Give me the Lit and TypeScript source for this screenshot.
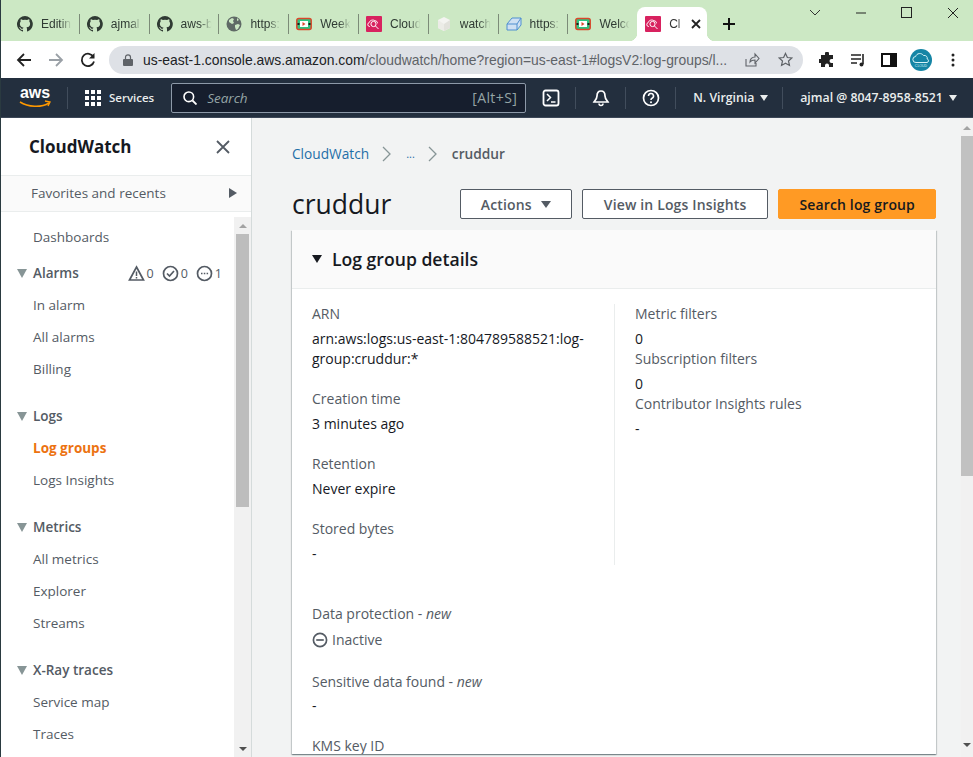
import { LitElement, html, css, svg } from "lit";
import { customElement } from "lit/decorators.js";

const GH = svg`<path fill="#2f3a33" d="M8 0a8 8 0 0 0-2.5 15.6c.4.1.5-.2.5-.4v-1.4c-2.2.5-2.7-1-2.7-1-.4-.9-.9-1.2-.9-1.2-.7-.5.1-.5.1-.5.8.1 1.2.8 1.2.8.7 1.2 1.9.9 2.3.7.1-.5.3-.9.5-1.1-1.8-.2-3.6-.9-3.6-4 0-.9.3-1.6.8-2.1-.1-.2-.4-1 .1-2.1 0 0 .7-.2 2.2.8a7.7 7.7 0 0 1 4 0c1.5-1 2.2-.8 2.2-.8.4 1.1.2 1.9.1 2.1.5.6.8 1.3.8 2.1 0 3.1-1.9 3.7-3.7 3.9.3.3.6.8.6 1.5v2.2c0 .2.1.5.6.4A8 8 0 0 0 8 0z"/>`;
const GLOBE = svg`<circle cx="8" cy="8" r="7.5" fill="#5f6a66"/><path fill="#cce8c4" d="M3 4l3-2 2 1-1 2 1 2-2 1-3-2zM9 9l3-1 2 1-2 4-2 1-1-3zM11 2l2 2-2 1z"/>`;
const VIDEO = svg`<rect x=".8" y="2.5" width="14.4" height="11" rx="2" fill="#2ec27e" stroke="#d9472b" stroke-width="1.5"/><rect x="4" y="5" width="8" height="6" fill="#fff"/><path d="M6.5 6l3 2-3 2z" fill="#d9472b"/><rect x="1.5" y="7" width="2" height="2" fill="#1b1b1b"/><rect x="12.5" y="7" width="2" height="2" fill="#1b1b1b"/>`;
const WATCH = svg`<rect width="16" height="16" rx="1" fill="#d8225f"/><circle cx="7.5" cy="8" r="2.6" fill="none" stroke="#fff" stroke-width="1"/><path d="M4 10.5H3.5a2 2 0 0 1-.3-3.9c.5-2.4 4-3.4 5.8-1.8 1.5 0 2.5 1 2.5 2.5M9.5 10l3 3" fill="none" stroke="#fff" stroke-width="1"/>`;
const BOX = svg`<path d="M8 1l6 3v8l-6 3-6-3V4z" fill="#f4f4f1"/><path d="M8 8l6-4v8l-6 3z" fill="#e2e2dc"/><path d="M8 8L2 4v8l6 3z" fill="#ecece7"/>`;
const SHAPE = svg`<path d="M1 14V8l5-6h9v7l-4 5zM1 8h10v6M11 8l4-6" fill="#cfe0f3" stroke="#4f8fd0" stroke-width="1"/>`;

const TABS = [
  { icon: GH, title: "Editin" },
  { icon: GH, title: "ajmal" },
  { icon: GH, title: "aws-b" },
  { icon: GLOBE, title: "https:" },
  { icon: VIDEO, title: "Week" },
  { icon: WATCH, title: "Cloud" },
  { icon: BOX, title: "watch" },
  { icon: SHAPE, title: "https:" },
  { icon: VIDEO, title: "Welco" },
];

const NAV_ITEMS = [
  { kind: "link", label: "Dashboards" },
  { kind: "head", label: "Alarms", alarms: true },
  { kind: "link", label: "In alarm" },
  { kind: "link", label: "All alarms" },
  { kind: "link", label: "Billing" },
  { kind: "head", label: "Logs", spaced: true },
  { kind: "link", label: "Log groups", active: true },
  { kind: "link", label: "Logs Insights" },
  { kind: "head", label: "Metrics", spaced: true },
  { kind: "link", label: "All metrics" },
  { kind: "link", label: "Explorer" },
  { kind: "link", label: "Streams" },
  { kind: "head", label: "X-Ray traces", spaced: true },
  { kind: "link", label: "Service map" },
  { kind: "link", label: "Traces" },
];

@customElement("app-root")
export class AppRoot extends LitElement {
  static styles = css`
    :host {
      display: block;
      width: 973px;
      height: 757px;
      overflow: hidden;
      font-family: "Open Sans", "Noto Sans", sans-serif;
      color: #16191f;
      background: #f2f3f3;
    }
    .shell {
      height: 757px;
      display: flex;
      flex-direction: column;
      border-left: 1px solid #2a3a40;
      box-sizing: border-box;
    }

    /* Browser tab strip */
    .tabstrip {
      height: 41px;
      flex: none;
      background: #cce8c4;
      display: flex;
      align-items: flex-end;
      padding-left: 8px;
      position: relative;
    }
    .tab {
      width: 69.8px;
      height: 34px;
      box-sizing: border-box;
      padding: 0 3px 0 8px;
      display: flex;
      align-items: center;
      gap: 8px;
      position: relative;
      font: 12px "Liberation Sans", Arial, sans-serif;
      color: #2f3a33;
      white-space: nowrap;
    }
    .tab + .tab::before {
      content: "";
      position: absolute;
      left: 0;
      top: 7px;
      height: 20px;
      width: 1px;
      background: #7c8b78;
    }
    .tab svg { width: 16px; height: 16px; flex: none; }
    .tab .name {
      width: 34px;
      overflow: hidden;
      -webkit-mask-image: linear-gradient(to right, #000 55%, transparent 90%);
      mask-image: linear-gradient(to right, #000 55%, transparent 90%);
    }
    .tab.active {
      background: #fff;
      border-radius: 8px 8px 0 0;
      color: #333;
      gap: 8px;
    }
    .tab.active .name {
      width: 14px;
      -webkit-mask-image: linear-gradient(to right, #000 65%, transparent 100%);
      mask-image: linear-gradient(to right, #000 65%, transparent 100%);
    }
    .tab.active .x { width: 10px; height: 10px; margin-left: 0; }
    .tab.active::before,
    .tab.active::after {
      content: "";
      position: absolute;
      bottom: 0;
      top: auto;
      width: 8px;
      height: 8px;
    }
    .tab.active::before {
      left: -8px;
      background: radial-gradient(circle at 0 0, transparent 8px, #fff 8.5px);
    }
    .tab.active::after {
      right: -8px;
      background: radial-gradient(circle at 100% 0, transparent 8px, #fff 8.5px);
    }
    .newtab { width: 14px; height: 14px; margin: 0 0 10px 15px; }
    .winctl {
      position: absolute;
      right: -3px;
      top: 0;
      display: flex;
    }
    .winctl span {
      width: 46px;
      height: 26px;
      display: flex;
      align-items: center;
      justify-content: center;
    }

    /* Address bar */
    .toolbar {
      height: 37px;
      flex: none;
      background: #fff;
      display: flex;
      align-items: center;
      padding-left: 15px;
      box-sizing: border-box;
    }
    .toolbar .navbtn { width: 16px; height: 16px; margin-right: 16px; flex: none; }
    .omnibox {
      width: 694px;
      margin-left: -3px;
      height: 28px;
      border-radius: 14px;
      background: #dee1e6;
      display: flex;
      align-items: center;
      padding: 0 10px 0 14px;
      box-sizing: border-box;
      font: 13.9px "Liberation Sans", Arial, sans-serif;
      color: #202124;
      white-space: nowrap;
      flex: none;
    }
    .omnibox .lock { width: 10px; height: 12px; margin-right: 10px; flex: none; }
    .omnibox .rest { color: #5f6368; }
    .omnibox .url { flex: 1; }
    .omnibox .share { width: 16px; height: 16px; margin-right: 18px; }
    .omnibox .star { width: 15px; height: 15px; }
    .tools {
      display: flex;
      align-items: center;
      margin-left: 16px;
      gap: 15px;
    }
    .tools svg { width: 16px; height: 16px; display: block; }
    .avatar {
      width: 22px;
      height: 22px;
      margin: 0 -2px;
      border-radius: 50%;
      background: #1585a5;
      display: flex;
      align-items: center;
      justify-content: center;
    }
    .tools .avatar svg { width: 22px; height: 22px; }

    /* AWS console nav */
    .awsnav {
      height: 40px;
      flex: none;
      background: #232f3e;
      color: #eaeded;
      display: flex;
      align-items: center;
      font-size: 12.3px;
      font-weight: 600;
      box-sizing: border-box;
      border-bottom: 1px solid #3c4757;
    }
    .logo { width: 32px; height: 30px; margin-left: 18px; flex: none; }
    .navsep { width: 1px; height: 22px; background: #414d5c; flex: none; }
    .awsnav .s1 { margin: 0 17px 0 16px; }
    .grid {
      width: 16px;
      height: 16px;
      display: grid;
      grid-template-columns: repeat(3, 4px);
      grid-template-rows: repeat(3, 4px);
      gap: 2px;
      margin-right: 8px;
      flex: none;
    }
    .grid i { background: #fff; display: block; }
    .services { font-size: 11.5px; }
    .search {
      width: 355px;
      height: 30px;
      margin-left: 17px;
      background: #161e2d;
      border: 1px solid #8d99a8;
      border-radius: 2px;
      box-sizing: border-box;
      display: flex;
      align-items: center;
      padding: 0 8px 0 11px;
      font-weight: 400;
      font-size: 13.5px;
      color: #95a5a6;
      flex: none;
    }
    .search svg { width: 14px; height: 14px; margin-right: 10px; }
    .search em { flex: 1; }
    .search .keys { font-size: 14px; letter-spacing: .4px; }
    .navicon { width: 49px; display: flex; justify-content: center; flex: none; }
    .navicon svg { width: 18px; height: 18px; display: block; }
    .caret {
      display: inline-block;
      width: 0;
      height: 0;
      border-top: 6px solid #eaeded;
      border-left: 4px solid transparent;
      border-right: 4px solid transparent;
      margin-left: 6px;
      vertical-align: 1px;
    }
    .region { width: 106px; padding-left: 17px; box-sizing: border-box; flex: none; white-space: nowrap; }
    .account { margin-left: 17px; white-space: nowrap; }

    /* Page below the nav */
    .body {
      flex: 1;
      min-height: 0;
      display: flex;
    }
    .side {
      width: 250px;
      flex: none;
      background: #fff;
      border-right: 1px solid #d5dbdb;
      box-sizing: content-box;
      display: flex;
      flex-direction: column;
    }
    .sidehead {
      height: 57px;
      flex: none;
      display: flex;
      align-items: center;
      justify-content: space-between;
      padding: 0 21px 0 28px;
      font-size: 17px;
      font-weight: 700;
      box-sizing: border-box;
    }
    .sidehead svg { width: 14px; height: 14px; }
    .favs {
      height: 37px;
      flex: none;
      background: #fafafa;
      border-top: 1px solid #eaeded;
      border-bottom: 1px solid #eaeded;
      box-sizing: border-box;
      display: flex;
      align-items: center;
      justify-content: space-between;
      padding: 0 14px 1px 30px;
      font-size: 13.5px;
      color: #545b64;
    }
    .favs .tri {
      width: 0;
      height: 0;
      border-left: 8px solid #545b64;
      border-top: 5px solid transparent;
      border-bottom: 5px solid transparent;
    }
    .sidescroll {
      flex: 1;
      min-height: 0;
      display: flex;
      overflow: hidden;
      padding-top: 5px;
    }
    .navlist {
      flex: 1;
      padding: 4px 0 0 0;
      font-size: 13.5px;
      color: #545b64;
      overflow: hidden;
    }
    .item {
      height: 32px;
      display: flex;
      align-items: center;
      padding-left: 32px;
      white-space: nowrap;
    }
    .item.head {
      font-weight: 600;
      padding-left: 16px;
      margin-top: 4px;
    }
    .item.head.spaced { margin-top: 15px; }
    .item.active { color: #ec7211; font-weight: 700; }
    .item .down {
      width: 0;
      height: 0;
      border-top: 9px solid #879596;
      border-left: 5.5px solid transparent;
      border-right: 5.5px solid transparent;
      margin-right: 6px;
    }
    .alarms {
      margin-left: auto;
      margin-right: 12px;
      display: flex;
      align-items: center;
      font-weight: 400;
      font-size: 12.5px;
      gap: 2px;
    }
    .alarms svg { width: 17px; height: 17px; margin-left: 6px; }
    .bar {
      width: 17px;
      flex: none;
      background: #f1f1f1;
      display: flex;
      flex-direction: column;
      align-items: center;
    }
    .bar .up, .bar .dn {
      width: 0;
      height: 0;
      border-left: 4px solid transparent;
      border-right: 4px solid transparent;
      flex: none;
    }
    .bar .up { border-bottom: 4px solid #a3a3a3; margin: 7px 0 6px; }
    .bar .dn { border-top: 4px solid #505050; margin: auto 0 6px; }
    .bar .thumb { width: 13px; height: 273px; background: #bdbdbd; flex: none; }

    .main {
      flex: 1;
      min-width: 0;
      display: flex;
    }
    .content {
      flex: 1;
      min-width: 0;
      padding: 0 25px 3px 40px;
      display: flex;
      flex-direction: column;
      overflow: hidden;
    }
    .crumbs {
      height: 71px;
      flex: none;
      display: flex;
      align-items: center;
      box-sizing: border-box;
      font-size: 13.7px;
      color: #545b64;
      font-weight: 600;
    }
    .crumbs a { color: #1f6fa8; font-weight: 400; }
    .crumbs .dots { font-size: 11px; }
    .crumbs svg { width: 10px; height: 16px; margin: 0 14px 0 13px; }
    .titlerow {
      height: 30px;
      flex: none;
      display: flex;
      align-items: center;
      margin-bottom: 11px;
    }
    h1 {
      margin: 0;
      font-size: 26.5px;
      font-weight: 400;
      flex: 1;
      line-height: 30px;
    }
    .btn {
      height: 30px;
      box-sizing: border-box;
      border: 1px solid #545b64;
      border-radius: 2px;
      background: #fff;
      color: #545b64;
      font: 600 14px "Open Sans", "Noto Sans", sans-serif;
      letter-spacing: .15px;
      padding: 0 20px;
      margin-left: 10px;
      display: flex;
      align-items: center;
      white-space: nowrap;
    }
    .btn.wide { padding: 0 21px; }
    .btn.primary {
      background: #ff9a24;
      border-color: #ff9a24;
      color: #16191f;
    }
    .btn .dn {
      width: 0;
      height: 0;
      border-top: 7px solid #545b64;
      border-left: 5px solid transparent;
      border-right: 5px solid transparent;
      margin-left: 9px;
    }
    .card {
      flex: 1;
      min-height: 0;
      background: #fff;
      box-shadow: 0 1px 1px 0 rgba(0, 28, 36, 0.3), 1px 1px 1px 0 rgba(0, 28, 36, 0.15), -1px 1px 1px 0 rgba(0, 28, 36, 0.15);
      overflow: hidden;
    }
    .cardhead {
      height: 59px;
      background: #fafafa;
      border-bottom: 1px solid #eaeded;
      box-sizing: border-box;
      display: flex;
      align-items: center;
      padding: 0 0 1px 20px;
      font-size: 17.6px;
      font-weight: 600;
    }
    .cardhead i {
      width: 0;
      height: 0;
      border-top: 8px solid #16191f;
      border-left: 5.5px solid transparent;
      border-right: 5.5px solid transparent;
      margin-right: 10px;
    }
    .columns {
      display: grid;
      grid-template-columns: 303px 1fr;
      padding: 15px 20px 0;
    }
    .col1 {
      height: 261px;
      border-right: 1px solid #eaeded;
      padding-right: 20px;
    }
    .col2 { padding-left: 20px; }
    .field { margin-bottom: 20px; font-size: 14px; }
    .label { color: #545b64; line-height: 20px; margin-bottom: 5px; }
    .value { line-height: 20px; color: #16191f; }
    .tight { margin: 0; }
    .below { padding: 39px 20px 0; }
    .status {
      display: flex;
      align-items: center;
      gap: 4px;
      color: #545b64;
      margin-top: 6px;
      padding-bottom: 2px;
    }
    .status svg { width: 16px; height: 16px; }
    .sens .label { margin-bottom: 4px; }

    .mainbar { width: 12px; background: #f1f1f1; }
    .mainbar .up { margin: 8px 0 6px; }
    .mainbar .dn { margin-bottom: 10px; }
    .mainbar .thumb { width: 12px; height: 340px; background: #c1c1c1; }
  `;

  render() {
    return html`
      <div class="shell">
        <div class="tabstrip">
          ${TABS.map(
            (t) => html`<div class="tab">
              <svg viewBox="0 0 16 16">${t.icon}</svg>
              <span class="name">${t.title}</span>
            </div>`
          )}
          <div class="tab active">
            <svg viewBox="0 0 16 16">${WATCH}</svg>
            <span class="name">Cl</span>
            <svg class="x" viewBox="0 0 10 10"><path d="M1 1l8 8M9 1l-8 8" stroke="#222" stroke-width="1.8" /></svg>
          </div>
          <svg class="newtab" viewBox="0 0 14 14"><path d="M7 1v12M1 7h12" stroke="#111" stroke-width="2" /></svg>
          <div class="winctl">
            <span><svg width="12" height="8" viewBox="0 0 12 8"><path d="M1 1l5 5 5-5" fill="none" stroke="#333" /></svg></span>
            <span><svg width="12" height="2" viewBox="0 0 12 2"><path d="M1 1h10" stroke="#222" /></svg></span>
            <span><svg width="12" height="12" viewBox="0 0 12 12"><rect x=".5" y=".5" width="10" height="10" fill="none" stroke="#222" /></svg></span>
            <span><svg width="12" height="12" viewBox="0 0 12 12"><path d="M1 1l10 10M11 1L1 11" stroke="#222" /></svg></span>
          </div>
        </div>

        <div class="toolbar">
          <svg class="navbtn" viewBox="0 0 16 16"><path d="M15 8H2M8 2L2 8l6 6" fill="none" stroke="#222" stroke-width="1.8" /></svg>
          <svg class="navbtn" viewBox="0 0 16 16"><path d="M1 8h13M8 2l6 6-6 6" fill="none" stroke="#9aa0a6" stroke-width="1.8" /></svg>
          <svg class="navbtn" viewBox="0 0 16 16"><path d="M13.5 5A6.2 6.2 0 1 0 14 9.5" fill="none" stroke="#222" stroke-width="1.8" /><path d="M14.5 1v5.5H9z" fill="#222" /></svg>
          <div class="omnibox">
            <svg class="lock" viewBox="0 0 10 12"><path d="M2.5 5V3.3a2.5 2.5 0 0 1 5 0V5" fill="none" stroke="#5f6368" stroke-width="1.2" /><rect y="5" width="10" height="7" rx="1" fill="#5f6368" /></svg>
            <span class="url">us-east-1.console.aws.amazon.com<span class="rest">/cloudwatch/home?region=us-east-1#logsV2:log-groups/l...</span></span>
            <svg class="share" viewBox="0 0 16 16"><path d="M2 7v7h10v-3M6 10c0-3 2-5 5-5V2l4 4.5L11 11V8c-2 0-4 .5-5 2z" fill="none" stroke="#5f6368" stroke-width="1.1" /></svg>
            <svg class="star" viewBox="0 0 16 16"><path d="M8 1.5l2 4.4 4.8.5-3.6 3.2 1 4.7L8 11.9l-4.2 2.4 1-4.7L1.2 6.4 6 5.9z" fill="none" stroke="#5f6368" stroke-width="1.3" /></svg>
          </div>
          <div class="tools">
            <svg viewBox="0 0 16 16"><path fill="#222" d="M6 1.5a2 2 0 0 1 4 0V3h4v4h-1.5a2 2 0 0 0 0 4H14v4h-4v-1.5a2 2 0 0 0-4 0V15H2v-4H.5a2 2 0 0 1 0-4H2V3h4z" /></svg>
            <svg viewBox="0 0 16 16"><path d="M1 3h10M1 7h10M1 11h6" stroke="#222" stroke-width="1.3" /><path d="M13 2v10" stroke="#222" stroke-width="1.6" /><circle cx="11.5" cy="12.5" r="2" fill="#222" /></svg>
            <svg viewBox="0 0 16 16"><rect x="1" y="2" width="14" height="12" fill="none" stroke="#111" stroke-width="2" /><rect x="9" y="2" width="6" height="12" fill="#111" /></svg>
            <div class="avatar">
              <svg viewBox="0 0 22 22">
                <path d="M6 13.5a3 3 0 0 1-.3-6c.8-3.5 6-4 7.8-1 2.5-.5 4.2 1.3 3.7 3.5a1.8 1.8 0 0 1-.2 3.5z" fill="none" stroke="#d6f2f7" stroke-width="1" />
                <text x="11" y="17.5" text-anchor="middle" font-family="'Liberation Sans', Arial, sans-serif" font-size="3.5" fill="#d6f2f7">CLOUD</text>
              </svg>
            </div>
            <svg viewBox="0 0 16 16"><circle cx="8" cy="3" r="1.5" fill="#222" /><circle cx="8" cy="8" r="1.5" fill="#222" /><circle cx="8" cy="13" r="1.5" fill="#222" /></svg>
          </div>
        </div>

        <div class="awsnav">
          <svg class="logo" viewBox="0 -4 32 30">
            <text x="16" y="11" text-anchor="middle" font-family="'Liberation Sans', Arial, sans-serif" font-size="16" fill="#fff">aws</text>
            <path d="M1 15c8 5 21 6 29 1" fill="none" stroke="#ff9900" stroke-width="1.6" />
            <path d="M26 14l5 1-2 4" fill="none" stroke="#ff9900" stroke-width="1.4" />
          </svg>
          <span class="navsep s1"></span>
          <div class="grid">${Array.from({ length: 9 }, () => html`<i></i>`)}</div>
          <span class="services">Services</span>
          <div class="search">
            <svg viewBox="0 0 14 14"><circle cx="5.8" cy="5.8" r="4.8" fill="none" stroke="#fff" stroke-width="1.6" /><path d="M9.5 9.5L13.5 13.5" stroke="#fff" stroke-width="1.8" /></svg>
            <em>Search</em>
            <span class="keys">[Alt+S]</span>
          </div>
          <div class="navicon">
            <svg viewBox="0 0 18 18"><rect x="1.5" y="1.5" width="15" height="15" rx="2" fill="none" stroke="#fff" stroke-width="1.8" /><path d="M5 5l3.5 3.5L5 12M9 13h4.5" fill="none" stroke="#fff" stroke-width="1.5" /></svg>
          </div>
          <span class="navsep"></span>
          <div class="navicon">
            <svg viewBox="0 0 18 18"><path d="M9 2c-3 0-4 2.5-4 5 0 3-2.5 5-3 6h14c-.5-1-3-3-3-6 0-2.5-1-5-4-5z" fill="none" stroke="#fff" stroke-width="1.7" /><path d="M7 14.5a2 2 0 0 0 4 0" fill="none" stroke="#fff" stroke-width="1.5" /></svg>
          </div>
          <span class="navsep"></span>
          <div class="navicon">
            <svg viewBox="0 0 18 18"><circle cx="9" cy="9" r="7.5" fill="none" stroke="#fff" stroke-width="1.7" /><path d="M6.5 7a2.5 2.5 0 1 1 3.5 2.3c-.7.3-1 .7-1 1.7" fill="none" stroke="#fff" stroke-width="1.6" /><circle cx="9" cy="13.2" r="1" fill="#fff" /></svg>
          </div>
          <span class="navsep"></span>
          <div class="region">N. Virginia<span class="caret"></span></div>
          <span class="navsep"></span>
          <div class="account">ajmal @ 8047-8958-8521<span class="caret"></span></div>
        </div>

        <div class="body">
          <aside class="side">
            <div class="sidehead">
              <span>CloudWatch</span>
              <svg viewBox="0 0 14 14"><path d="M1 1l12 12M13 1L1 13" stroke="#545b64" stroke-width="1.8" /></svg>
            </div>
            <div class="favs"><span>Favorites and recents</span><span class="tri"></span></div>
            <div class="sidescroll">
              <div class="navlist">
                ${NAV_ITEMS.map((n) => this.renderNavItem(n))}
              </div>
              <div class="bar">
                <span class="up"></span>
                <span class="thumb"></span>
                <span class="dn"></span>
              </div>
            </div>
          </aside>

          <div class="main">
            <div class="content">
              <div class="crumbs">
                <a>CloudWatch</a>
                <svg viewBox="0 0 10 16"><path d="M1 1l7 7-7 7" fill="none" stroke="#879596" stroke-width="1.3" /></svg>
                <a class="dots">...</a>
                <svg viewBox="0 0 10 16"><path d="M1 1l7 7-7 7" fill="none" stroke="#879596" stroke-width="1.3" /></svg>
                <span>cruddur</span>
              </div>
              <div class="titlerow">
                <h1>cruddur</h1>
                <div class="btn">Actions<span class="dn"></span></div>
                <div class="btn wide">View in Logs Insights</div>
                <div class="btn primary">Search log group</div>
              </div>
              <section class="card">
                <div class="cardhead"><i></i>Log group details</div>
                <div class="columns">
                  <div class="col1">
                    <div class="field"><div class="label">ARN</div><div class="value">arn:aws:logs:us-east-1:804789588521:log-group:cruddur:*</div></div>
                    <div class="field"><div class="label">Creation time</div><div class="value">3 minutes ago</div></div>
                    <div class="field"><div class="label">Retention</div><div class="value">Never expire</div></div>
                    <div class="field"><div class="label">Stored bytes</div><div class="value">-</div></div>
                  </div>
                  <div class="col2">
                    <div class="field tight"><div class="label">Metric filters</div><div class="value">0</div></div>
                    <div class="field tight"><div class="label">Subscription filters</div><div class="value">0</div></div>
                    <div class="field tight"><div class="label">Contributor Insights rules</div><div class="value">-</div></div>
                  </div>
                </div>
                <div class="below">
                  <div class="field"><div class="label">Data protection - <em>new</em></div>
                    <div class="value status">
                      <svg viewBox="0 0 17 17"><circle cx="8.5" cy="8.5" r="7" fill="none" stroke="#545b64" stroke-width="1.8" /><path d="M4.5 8.5h8" stroke="#545b64" stroke-width="1.8" /></svg>
                      Inactive
                    </div>
                  </div>
                  <div class="field sens"><div class="label">Sensitive data found - <em>new</em></div><div class="value">-</div></div>
                  <div class="field"><div class="label">KMS key ID</div></div>
                </div>
              </section>
            </div>
            <div class="bar mainbar">
              <span class="up"></span>
              <span class="thumb"></span>
              <span class="dn"></span>
            </div>
          </div>
        </div>
      </div>
    `;
  }

  renderNavItem(n: any) {
    if (n.kind === "head") {
      return html`<div class="item head ${n.spaced ? "spaced" : ""}">
        <span class="down"></span>${n.label}
        ${n.alarms
          ? html`<span class="alarms">
              <svg viewBox="0 0 17 17"><path d="M8.5 2L15.5 15h-14z" fill="none" stroke="#545b64" stroke-width="1.7" /><path d="M8.5 6.5v4.5M8.5 12v1.5" stroke="#545b64" stroke-width="1.5" /></svg>0
              <svg viewBox="0 0 17 17"><circle cx="8.5" cy="8.5" r="7" fill="none" stroke="#545b64" stroke-width="1.7" /><path d="M5 8.5l2.5 2.5 4.5-5" fill="none" stroke="#545b64" stroke-width="1.7" /></svg>0
              <svg viewBox="0 0 17 17"><circle cx="8.5" cy="8.5" r="7" fill="none" stroke="#545b64" stroke-width="1.7" /><path d="M5 8.5h1.5M7.8 8.5h1.5M10.6 8.5h1.5" stroke="#545b64" stroke-width="1.6" /></svg>1
            </span>`
          : ""}
      </div>`;
    }
    return html`<div class="item ${n.active ? "active" : ""}">${n.label}</div>`;
  }
}
